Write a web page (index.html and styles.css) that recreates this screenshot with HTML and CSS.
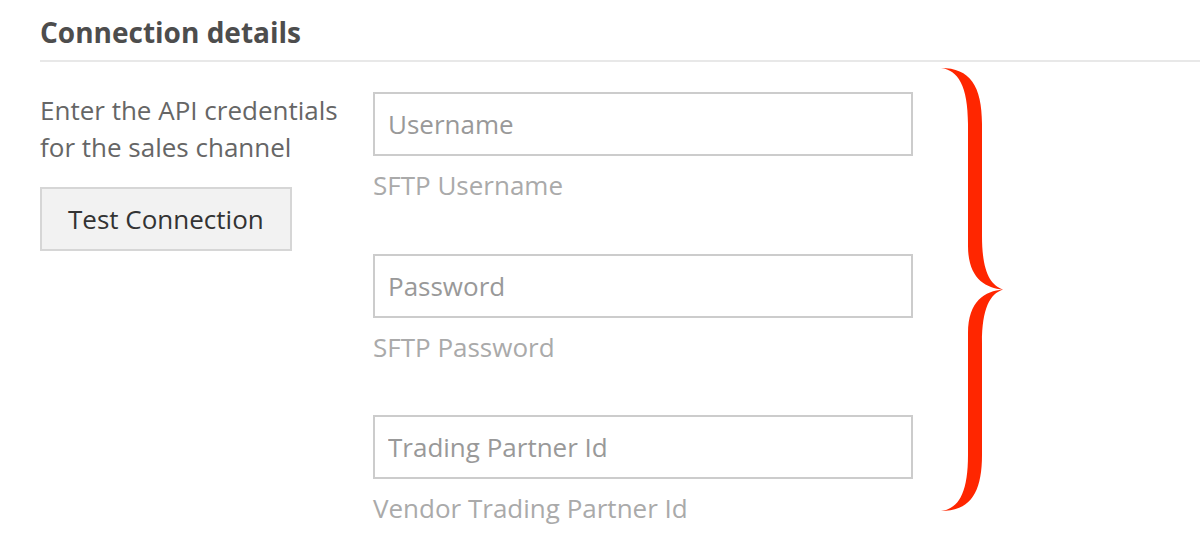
FILE: index.html
```html
<!DOCTYPE html>
<html>
  <head>
    <meta name="viewport" content="width=device-width,initial-scale=1.0">
    <title>Connection details</title>
    <link rel="stylesheet" href="styles.css">
  </head>
  <body>
    <div id="connection">
      <h2 class="section-title">Connection details</h2>
      <div class="section-body">
        <div class="section-intro">
          <p>Enter the API credentials for the sales channel</p>
          <button class="btn-test">Test Connection</button>
        </div>
        <div class="fields">
          <div class="field">
            <input type="text" placeholder="Username" />
            <div class="field-help">SFTP Username</div>
          </div>
          <div class="field">
            <input type="password" placeholder="Password" />
            <div class="field-help">SFTP Password</div>
          </div>
          <div class="field">
            <input type="text" placeholder="Trading Partner Id" />
            <div class="field-help">Vendor Trading Partner Id</div>
          </div>
        </div>
      </div>

      <!-- annotation brace drawn over the page -->
      <svg class="brace" width="70" height="450" viewBox="0 0 70 450">
        <path d="M1,2 C30,2 42,20 42,58 L42,170 C42,205 50,219 63,223.5 C50,228 42,242 42,277 L42,389 C42,427 30,445 1,445 C18,443 28,428 28,389 L28,267 C28,235 45,225 63,223.5 C45,222 28,212 28,180 L28,58 C28,20 18,4 1,2 Z" fill="#ff2600"/>
      </svg>
    </div>
  </body>
</html>
```

FILE: styles.css
```css
body {
  margin: 0;
  font-family: "Open Sans", "Liberation Sans", sans-serif;
  background: #fff;
  overflow: hidden;
}
#connection {
  position: relative;
  padding-left: 40px;
}
.section-title {
  margin: 0;
  padding: 14px 0 10px;
  font-size: 28px;
  line-height: 36px;
  font-weight: 700;
  color: #4d4d4d;
  border-bottom: 2px solid #e8e8e8;
}
.section-body {
  display: flex;
  margin-top: 30px;
}
.section-intro {
  width: 310px;
  margin-right: 23px;
}
.section-intro p {
  margin: 0;
  font-size: 26px;
  line-height: 37px;
  color: #666;
}
.btn-test {
  margin-top: 21px;
  height: 64px;
  padding: 0 26px;
  font-family: inherit;
  font-size: 26px;
  color: #333;
  background: #f2f2f2;
  border: 2px solid #d6d6d6;
  border-radius: 0;
}
.fields {
  display: flex;
  flex-direction: column;
}
.field {
  margin-bottom: 50.5px;
}
.field:last-child {
  margin-bottom: 0;
}
.field input {
  display: block;
  box-sizing: border-box;
  width: 540px;
  height: 64px;
  padding: 0 13px;
  font-family: inherit;
  font-size: 26px;
  color: #333;
  border: 2px solid #ccc;
  border-radius: 0;
  outline: none;
}
.field input::placeholder {
  color: #999;
}
.field-help {
  margin-top: 11px;
  font-size: 26px;
  line-height: 36px;
  color: #aaa;
}
.brace {
  position: absolute;
  left: 940px;
  top: 66px;
}
```
